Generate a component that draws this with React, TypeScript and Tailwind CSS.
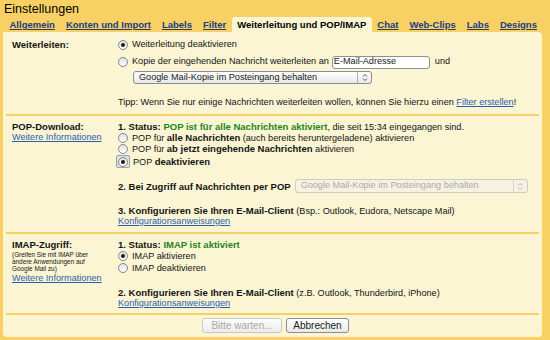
import type { ReactNode } from 'react';

const TABS = ['Allgemein', 'Konten und Import', 'Labels', 'Filter', 'Weiterleitung und POP/IMAP', 'Chat', 'Web-Clips', 'Labs', 'Designs'];
const ACTIVE_TAB = 'Weiterleitung und POP/IMAP';

function Radio({ checked = false, focused = false }: { checked?: boolean; focused?: boolean }) {
  const circle = (
    <span className="flex h-[10px] w-[10px] shrink-0 items-center justify-center rounded-full border border-[#878787] bg-gradient-to-b from-[#e0e0e0] to-white">
      {checked && <span className="h-[4px] w-[4px] rounded-full bg-[#1c1c1c]" />}
    </span>
  );
  if (!focused) return circle;
  return (
    <span className="-ml-[2px] flex h-[13px] w-[14px] shrink-0 items-center justify-center rounded-[2px] border border-[#9aa4b0] bg-[#dde3ea]">
      {circle}
    </span>
  );
}

function Option({ checked, focused, className = '', children }: { checked?: boolean; focused?: boolean; className?: string; children: ReactNode }) {
  return (
    <div className={`flex items-center ${className}`}>
      <Radio checked={checked} focused={focused} />
      <span className={focused ? 'ml-[3px]' : 'ml-[4px]'}>{children}</span>
    </div>
  );
}

function UpDown({ color }: { color: string }) {
  return (
    <svg width="6" height="9" viewBox="0 0 6 9" fill="none" stroke={color} strokeWidth="1">
      <path d="M1 3.5 L3 1.5 L5 3.5" />
      <path d="M1 5.5 L3 7.5 L5 5.5" />
    </svg>
  );
}

function Select({ label, disabled = false, className = '' }: { label: string; disabled?: boolean; className?: string }) {
  return (
    <div
      className={`flex items-center rounded-[3px] border ${
        disabled
          ? 'border-[#cfcbbd] bg-[#f6f2e2] text-[#ababab]'
          : 'border-[#8d8d8d] bg-gradient-to-b from-white to-[#e8e8e8] text-[#1a1a1a]'
      } ${className}`}
    >
      <span className="flex-1 truncate pl-[5px] leading-none">{label}</span>
      <span className={`flex h-full w-[14px] items-center justify-center border-l ${disabled ? 'border-[#d6d2c4]' : 'border-[#b0b0b0]'}`}>
        <UpDown color={disabled ? '#b5b5b5' : '#555'} />
      </span>
    </div>
  );
}

function Link({ children }: { children: ReactNode }) {
  return <span className="cursor-pointer text-[#2a5db0] underline">{children}</span>;
}

function Separator() {
  return <div className="mx-[3px] h-[2px] bg-[#f6cf66]" />;
}

export default function App() {
  return (
    <div className="h-[340px] w-[550px] overflow-hidden bg-[#f9d063] font-['Liberation_Sans',Arial,sans-serif] text-[#141414]">
      <div className="h-[17px] pl-[4px] pt-[1px] text-[12.5px] leading-[16px] text-black">Einstellungen</div>

      <nav className="flex h-[15px] items-stretch pl-[4px] text-[9.5px] font-bold">
        {TABS.map((tab) =>
          tab === ACTIVE_TAB ? (
            <div key={tab} className="flex items-center rounded-t-[3px] bg-[#fbf5d3] px-[5.5px] pt-[1px] text-black">
              {tab}
            </div>
          ) : (
            <a key={tab} className="flex cursor-pointer items-center px-[5.5px] pt-[1px] text-[#213c7c] underline">
              {tab}
            </a>
          )
        )}
      </nav>

      <div className="ml-[3px] h-[305px] w-[539px] overflow-hidden rounded-[4px] rounded-tl-none bg-[#fbf5d3] text-[9.15px]">
        {/* Weiterleiten */}
        <div className="flex pl-[9px] pt-[7px] pb-[6px]">
          <div className="h-[12px] w-[106px] text-[9.5px] font-bold leading-[12px]">Weiterleiten:</div>
          <div className="flex flex-col">
            <Option checked className="h-[12px]">Weiterleitung deaktivieren</Option>
            <div className="mt-[4px] flex h-[14px] items-center">
              <Radio />
              <span className="ml-[4px]">Kopie der eingehenden Nachricht weiterleiten an</span>
              <div className="ml-[3px] flex h-[13px] w-[98px] items-center rounded-[3px] border border-[#8f8f8f] bg-white pl-[1px] text-[#222]">
                E-Mail-Adresse
              </div>
              <span className="ml-[5px]">und</span>
            </div>
            <Select label="Google Mail-Kopie im Posteingang behalten" className="ml-[15px] mt-[2px] h-[13px] w-[239px]" />
            <div className="mt-[12px] h-[12px] leading-[12px]">
              Tipp: Wenn Sie nur einige Nachrichten weiterleiten wollen, können Sie hierzu einen <Link>Filter erstellen</Link>!
            </div>
          </div>
        </div>
        <Separator />

        {/* POP */}
        <div className="flex pl-[9px] pt-[5px] pb-[5px]">
          <div className="w-[106px] leading-[11px]">
            <div className="h-[11px] text-[9.5px] font-bold">POP-Download:</div>
            <div className="h-[11px]">
              <Link>Weitere Informationen</Link>
            </div>
          </div>
          <div className="flex flex-col leading-[11px]">
            <div className="h-[11px]">
              <span className="text-[9.5px] font-bold">1. Status: </span>
              <span className="text-[9.5px] font-bold text-[#1d861d]">POP ist für alle Nachrichten aktiviert</span>, die seit 15:34 eingegangen sind.
            </div>
            <Option className="h-[11px]">
              POP für <b className="text-[9.5px]">alle Nachrichten</b> (auch bereits heruntergeladene) aktivieren
            </Option>
            <Option className="h-[11px]">
              POP für <b className="text-[9.5px]">ab jetzt eingehende Nachrichten</b> aktivieren
            </Option>
            <Option checked focused className="mt-[1px] h-[13px]">
              POP <b className="text-[9.5px]">deaktivieren</b>
            </Option>
            <div className="mt-[11px] flex h-[14px] items-center">
              <b className="text-[9.5px]">2. Bei Zugriff auf Nachrichten per POP</b>
              <Select disabled label="Google Mail-Kopie im Posteingang behalten" className="ml-[4px] h-[14px] w-[233px]" />
            </div>
            <div className="mt-[12px] h-[11px]">
              <b className="text-[9.5px]">3. Konfigurieren Sie Ihren E-Mail-Client</b> (Bsp.: Outlook, Eudora, Netscape Mail)
            </div>
            <div className="h-[11px]">
              <Link>Konfigurationsanweisungen</Link>
            </div>
          </div>
        </div>
        <Separator />

        {/* IMAP */}
        <div className="flex pl-[9px] pt-[5px] pb-[4px]">
          <div className="w-[106px]">
            <div className="h-[11px] text-[9.5px] font-bold leading-[11px]">IMAP-Zugriff:</div>
            <div className="mt-[1px] h-[21px] text-[6.4px] leading-[7px]">
              (Greifen Sie mit IMAP über
              <br />
              andere Anwendungen auf
              <br />
              Google Mail zu)
            </div>
            <div className="mt-[1px] h-[11px] leading-[11px]">
              <Link>Weitere Informationen</Link>
            </div>
          </div>
          <div className="flex flex-col leading-[11px]">
            <div className="h-[11px]">
              <span className="text-[9.5px] font-bold">1. Status: </span>
              <span className="text-[9.5px] font-bold text-[#1d861d]">IMAP ist aktiviert</span>
            </div>
            <Option checked className="h-[12px]">IMAP aktivieren</Option>
            <Option className="h-[12px]">IMAP deaktivieren</Option>
            <div className="mt-[13px] h-[11px]">
              <b className="text-[9.5px]">2. Konfigurieren Sie Ihren E-Mail-Client</b> (z.B. Outlook, Thunderbird, iPhone)
            </div>
            <div className="h-[11px]">
              <Link>Konfigurationsanweisungen</Link>
            </div>
          </div>
        </div>
        <Separator />

        <div className="flex justify-center gap-[4px] pl-[6px] pt-[3px] pb-[4px] text-[10px]">
          <button
            type="button"
            disabled
            className="h-[15px] w-[80px] rounded-[3px] border border-[#c8c8c8] bg-gradient-to-b from-[#fdfdfd] to-[#ececec] leading-none text-[#a8a8a8]"
          >
            Bitte warten...
          </button>
          <button
            type="button"
            className="h-[15px] w-[63px] rounded-[3px] border border-[#8c8c8c] bg-gradient-to-b from-white to-[#e9e9e9] leading-none text-[#1a1a1a]"
          >
            Abbrechen
          </button>
        </div>
      </div>
    </div>
  );
}
